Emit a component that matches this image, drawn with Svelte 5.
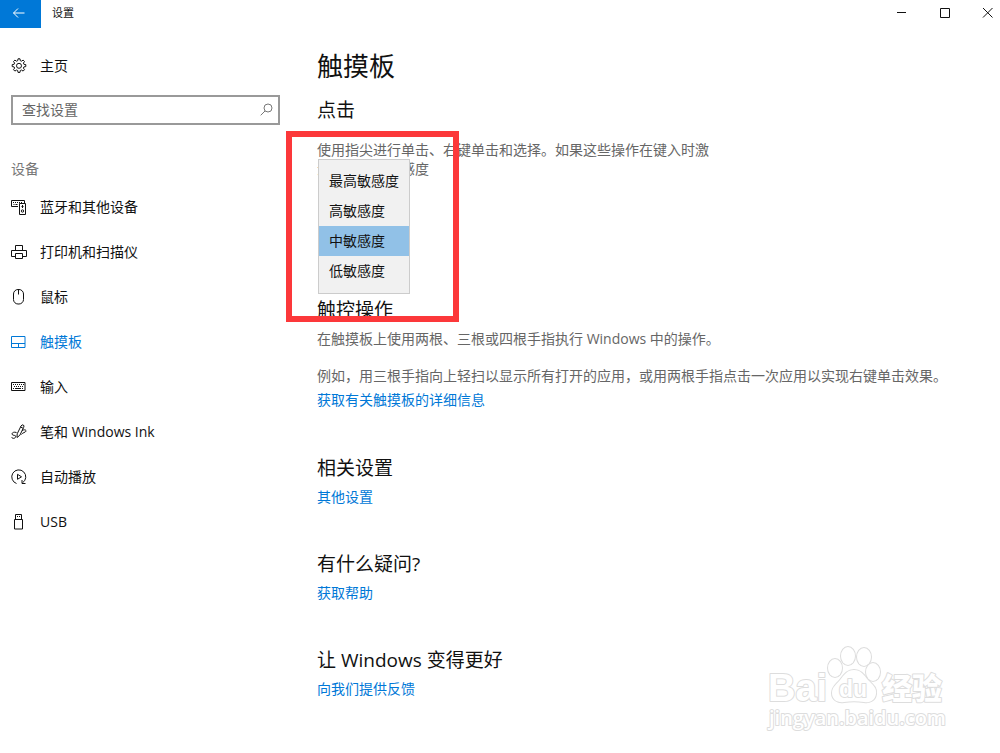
<script lang="ts">
    type NavItem = {
        id: string;
        label: string;
    };

    const navItems: NavItem[] = [
        { id: "bluetooth", label: "蓝牙和其他设备" },
        { id: "printers", label: "打印机和扫描仪" },
        { id: "mouse", label: "鼠标" },
        { id: "touchpad", label: "触摸板" },
        { id: "typing", label: "输入" },
        { id: "pen", label: "笔和 Windows Ink" },
        { id: "autoplay", label: "自动播放" },
        { id: "usb", label: "USB" }
    ];

    const levels = ["最高敏感度", "高敏感度", "中敏感度", "低敏感度"];

    let current = $state("touchpad");
    let sensitivity = $state("中敏感度");
    let query = $state("");

    function select(event: MouseEvent, id: string) {
        event.preventDefault();
        current = id;
    }
</script>

<div class="window">
    <header class="titlebar">
        <button class="back" aria-label="返回">
            <svg width="14" height="12" viewBox="0 0 14 12"><path d="M12.5 6H1.5M6 1.5 1.5 6 6 10.5" /></svg>
        </button>
        <span class="caption">设置</span>
        <div class="controls">
            <button aria-label="最小化">
                <svg width="11" height="11" viewBox="0 0 11 11"><path d="M1 5.5h9" /></svg>
            </button>
            <button aria-label="最大化">
                <svg width="11" height="11" viewBox="0 0 11 11"><path d="M1.5 1.5h9v9h-9z" /></svg>
            </button>
            <button aria-label="关闭">
                <svg width="11" height="11" viewBox="0 0 11 11"><path d="M1 1l9.5 9.5M10.5 1 1 10.5" /></svg>
            </button>
        </div>
    </header>

    <div class="body">
        <aside class="sidebar">
            <a class="nav-link" href="#home">
                <svg width="16" height="16" viewBox="0 0 16 16" aria-hidden="true">
                    <path d="M6.7 2.700 7 .8h2l.3 1.900 1.200.5 1.600-1.100 1.400 1.400-1.100 1.600.5 1.200 1.900.3v2l-1.900.3-.5 1.200 1.100 1.600-1.400 1.400-1.600-1.100-1.200.5-.3 1.900H7l-.3-1.900-1.200-.5-1.600 1.100-1.400-1.400 1.100-1.600-.5-1.200-1.900-.3v-2l1.900-.3.5-1.200-1.100-1.600 1.400-1.400 1.600 1.100z" />
                    <circle cx="8" cy="7.800" r="2.500" />
                </svg>
                <span>主页</span>
            </a>

            <div class="search">
                <input type="search" placeholder="查找设置" aria-label="查找设置" bind:value={query} />
                <svg width="13" height="13" viewBox="0 0 13 13" aria-hidden="true">
                    <circle cx="8" cy="5" r="4" />
                    <path d="M5 8 .7 12.300" />
                </svg>
            </div>

            <h2 class="group">设备</h2>
            <nav>
                {#each navItems as item (item.id)}
                    <a
                            class="nav-link"
                            class:active={item.id === current}
                            href={`#${item.id}`}
                            onclick={(event) => select(event, item.id)}
                    >
                        <svg width="16" height="16" viewBox="0 0 16 16" aria-hidden="true">
                            {#if item.id === "bluetooth"}
                                <path d="M7 7.500H.5v-6h13V4M2 3.500h1m1 0h1m1 0h1m1 0h1m1 0h1M2.500 5.500h1m1 0h2" />
                                <path d="M8.500 4.500h6v11h-6z" />
                                <path d="M10.500 7.500h2M11.500 6v3" />
                                <circle cx="11.500" cy="12" r="1.200" />
                            {:else if item.id === "printers"}
                                <path d="M4.500 6V1.500h7V6M4 12.500H.5v-6h15v6H12" />
                                <path d="M4.500 9.500h7v5h-7z" />
                            {:else if item.id === "mouse"}
                                <rect x="2.500" y=".5" width="10" height="14.500" rx="4.500" />
                                <path d="M7.500.5v5" />
                            {:else if item.id === "touchpad"}
                                <path d="M.5 2.500h13.500v11H.5zM.5 9.500h13.500M7.500 9.500v4" />
                            {:else if item.id === "typing"}
                                <path d="M.5 3.500h13.500v8H.5z" />
                                <path d="M2 5.500h1m1 0h1m1 0h1m1 0h1m1 0h1m1 0h1M3 7.500h1m1 0h1m1 0h1m1 0h1m1 0h1M2 9.500h1m1 0h6m1 0h1" />
                            {:else if item.id === "pen"}
                                <path d="M6 13.500 6.200 9.800 10 2Q11 .3 12.300 1t.3 2.500L8.800 11.300zM9.500 3l2.700 1.300" />
                                <path d="M5.500 8.500C2.500 7.500.5 9 1.200 10.500c.8 1.300 3.800.3 3.500 2.200-.3 2-3.700 2.300-4 .3M11 6.500c2-1.200 4.500-.7 4 .7-.5 1.300-3.500 1.300-4.500 3.300" />
                            {:else if item.id === "autoplay"}
                                <path d="M5.500 14.500A7 7 0 1 1 11.500 13.800M14.500 14.500h-3.500v-3.500" />
                                <path d="M6.500 5.300v5L10.500 7.800z" />
                            {:else}
                                <path d="M3.500 5.500h8v9.500h-8zM4.500 5.500v-5h6v5M6 2.500h1M8 2.500h1" />
                            {/if}
                        </svg>
                        <span>{item.label}</span>
                    </a>
                {/each}
            </nav>
        </aside>

        <main>
            <h1>触摸板</h1>

            <section class="tap">
                <h2>点击</h2>
                <p class="narrow" id="tap-hint">使用指尖进行单击、右键单击和选择。如果这些操作在键入时激活，请降低敏感度</p>
                <select class="levels" size="4" aria-labelledby="tap-hint" bind:value={sensitivity}>
                    {#each levels as level}
                        <option value={level}>{level}</option>
                    {/each}
                </select>
                <div class="highlight"></div>
            </section>

            <section class="gestures">
                <h2>触控操作</h2>
                <p>在触摸板上使用两根、三根或四根手指执行 Windows 中的操作。</p>
                <p class="sample">例如，用三根手指向上轻扫以显示所有打开的应用，或用两根手指点击一次应用以实现右键单击效果。</p>
                <a href="#details">获取有关触摸板的详细信息</a>
            </section>

            <section class="related">
                <h2>相关设置</h2>
                <a href="#other">其他设置</a>
            </section>

            <section class="related">
                <h2>有什么疑问?</h2>
                <a href="#help">获取帮助</a>
            </section>

            <section class="related">
                <h2>让 Windows 变得更好</h2>
                <a href="#feedback">向我们提供反馈</a>
            </section>
        </main>
    </div>

    <svg class="watermark" width="184" height="92" viewBox="0 0 184 92" aria-hidden="true">
        <g class="outline">
            <ellipse cx="69" cy="25" rx="7" ry="9" />
            <ellipse cx="82" cy="13" rx="7" ry="9" />
            <ellipse cx="98" cy="14" rx="7" ry="9" />
            <ellipse cx="107" cy="29" rx="7" ry="9" />
            <path d="M88 27c7 0 10 5 14 10 5 5 9 8 8 14-1 7-7 9-12 8-7-1-13-1-20 0-6 1-12-2-12-9 0-6 4-8 8-13s7-10 14-10z" />
        </g>
        <text class="brand" x="2" y="58">Bai</text>
        <text class="du" x="73" y="54">du</text>
        <text class="brand-cn" x="116" y="56">经验</text>
        <text class="site" x="3" y="82">jingyan.baidu.com</text>
    </svg>
</div>

<style>
    :global(body) {
        margin: 0;
        background: #fff;
    }

    .window {
        position: relative;
        min-height: 100vh;
        overflow: hidden;
        font-family: "Open Sans", "Noto Sans CJK SC", sans-serif;
        font-size: 14px;
        line-height: 19px;
        color: #111;
    }

    svg {
        fill: none;
        stroke: currentColor;
        stroke-width: 1;
        flex: none;
    }

    button {
        padding: 0;
        border: 0;
        background: none;
        color: inherit;
        display: grid;
        place-items: center;
    }

    h1, h2, p {
        margin: 0;
        font-weight: 400;
    }

    a {
        color: #0078d7;
        text-decoration: none;
    }

    .titlebar {
        display: flex;
        height: 28px;
    }

    .back {
        width: 41px;
        padding: 0 4px 2px 0;
        color: #fff;
        background: #0078d7;
    }

    .caption {
        margin-left: 11px;
        font-size: 11px;
        line-height: 26px;
    }

    .controls {
        display: flex;
        margin-left: auto;
        height: 25px;
    }

    .controls button {
        width: 43px;
    }

    .controls button:last-child {
        width: 34px;
        padding-right: 7px;
        justify-items: end;
    }

    .body {
        display: grid;
        grid-template-columns: 280px minmax(0, 1fr);
        column-gap: 37px;
    }

    .sidebar {
        padding-top: 15px;
    }

    .nav-link {
        display: flex;
        align-items: center;
        gap: 13px;
        height: 45px;
        padding-left: 11px;
        color: #111;
    }

    .nav-link.active {
        color: #0078d7;
    }

    .search {
        position: relative;
        margin: 7px 0 0 11px;
    }

    .search input {
        box-sizing: border-box;
        display: block;
        width: 100%;
        height: 30px;
        padding: 0 32px 2px 9px;
        border: 2px solid #999;
        border-radius: 0;
        background: #fff;
        font: inherit;
        appearance: none;
    }

    .search input::placeholder {
        color: #666;
        opacity: 1;
    }

    .search svg {
        position: absolute;
        right: 7px;
        top: 8px;
        color: #777;
    }

    .group {
        margin: 34px 0 6px 11px;
        font-size: 14px;
        line-height: 19px;
        color: #777;
    }

    main {
        padding: 18px 32px 40px 0;
    }

    h1 {
        font-size: 26px;
        line-height: 40px;
    }

    main h2 {
        font-size: 19px;
        line-height: 28px;
    }

    main p {
        color: #666;
    }

    main section a {
        display: inline-block;
    }

    .tap {
        position: relative;
        padding-top: 10px;
    }

    .narrow {
        max-width: 400px;
        margin-top: 16px;
    }

    .levels {
        position: absolute;
        left: 1px;
        top: 73px;
        box-sizing: border-box;
        width: 92px;
        height: 135px;
        padding: 6px 0;
        border: 1px solid #ccc;
        border-radius: 0;
        outline: 0;
        background: #f1f1f1;
        font: inherit;
        overflow: hidden;
        scrollbar-width: none;
    }

    .levels option {
        min-height: 30px;
        box-sizing: border-box;
        padding: 4px 10px 0;
        color: #111;
    }

    .levels option:checked {
        background: #91c1e7 linear-gradient(#91c1e7, #91c1e7);
    }

    .highlight {
        position: absolute;
        left: -31px;
        top: 45px;
        box-sizing: border-box;
        width: 173px;
        height: 191px;
        border: 6px solid #fc383a;
        pointer-events: none;
    }

    .gestures {
        margin-top: 118px;
        padding-bottom: 1px;
    }

    .gestures p {
        margin-top: 5px;
    }

    .gestures .sample {
        margin: 18px 0 5px;
    }

    .related {
        margin-top: 44px;
    }

    .related a {
        margin-top: 5px;
    }

    .watermark {
        position: absolute;
        right: 50px;
        bottom: 18px;
        pointer-events: none;
    }

    .watermark text,
    .outline {
        fill: #fff;
        stroke: #ddd;
        stroke-width: 2px;
        stroke-linejoin: round;
        paint-order: stroke;
    }

    .brand {
        font: 700 38px "Liberation Sans", sans-serif;
    }

    .du {
        font: 700 23px "Liberation Sans", sans-serif;
    }

    .brand-cn {
        font: 900 30px "Noto Sans CJK SC", sans-serif;
    }

    .site {
        font: 600 20px "Open Sans", sans-serif;
    }
</style>
